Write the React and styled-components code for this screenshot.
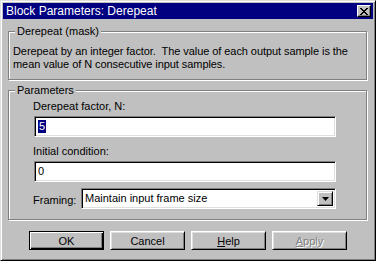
import React from "react";
import styled, { createGlobalStyle } from "styled-components";

const GlobalStyle = createGlobalStyle`
  html, body {
    margin: 0;
    padding: 0;
    background: #c0c0c0;
  }
  body {
    font-family: "Liberation Sans", Arial, sans-serif;
    font-size: 11px;
    color: #000;
  }
`;

const Window = styled.div`
  box-sizing: border-box;
  width: 376px;
  height: 261px;
  background: #c0c0c0;
  border: 1px solid;
  border-color: #dfdfdf #000 #000 #dfdfdf;
  box-shadow: inset 1px 1px 0 #fff, inset -1px -1px 0 #808080;
  padding: 2px;
  display: flex;
  flex-direction: column;
`;

const TitleBar = styled.div`
  height: 16px;
  background: #000080;
  color: #fff;
  display: flex;
  align-items: center;
  justify-content: space-between;
  padding: 0 2px 0 3px;
`;

const Title = styled.span`
  font-size: 12px;
  line-height: 16px;
  white-space: nowrap;
`;

const CloseButton = styled.div`
  box-sizing: border-box;
  width: 14px;
  height: 12px;
  background: #c0c0c0;
  border: 1px solid;
  border-color: #fff #000 #000 #fff;
  box-shadow: inset -1px -1px 0 #808080;
  display: flex;
  align-items: center;
  justify-content: center;
`;

const Body = styled.div`
  flex: 1;
  padding: 12px 6px 0 5px;
  display: flex;
  flex-direction: column;
`;

const GroupBox = styled.div`
  position: relative;
  border: 1px solid #808080;
  box-shadow: 1px 1px 0 #fff, inset 1px 1px 0 #fff;
  margin-top: ${(p) => p.$gap || 0}px;
  padding: ${(p) => p.$pad};
`;

const Legend = styled.span`
  position: absolute;
  top: -7px;
  left: 6px;
  padding: 0 2px;
  background: #c0c0c0;
  line-height: 13px;
`;

const Description = styled.p`
  margin: 0;
  line-height: 13px;
  letter-spacing: -0.07px;
`;

const FieldLabel = styled.div`
  line-height: 13px;
  margin-top: ${(p) => p.$gap || 0}px;
  margin-left: -1px;
`;

const EditBox = styled.div`
  box-sizing: border-box;
  height: 21px;
  margin-top: 3px;
  background: #fff;
  border: 1px solid;
  border-color: #808080 #fff #fff #808080;
  box-shadow: inset 1px 1px 0 #000, inset -1px -1px 0 #dfdfdf;
  padding: 3px 3px 0 3px;
  line-height: 13px;
  display: flex;
  align-items: flex-start;
  flex: ${(p) => (p.$grow ? 1 : "none")};
`;

const Selected = styled.span`
  background: #000080;
  color: #fff;
  padding: 0 1px;
  outline: 1px dotted #fff;
`;

const FramingRow = styled.div`
  display: flex;
  align-items: center;
  margin-top: 6px;
`;

const FramingLabel = styled.span`
  width: 48px;
  margin-left: -1px;
  padding-top: 4px;
  line-height: 13px;
`;

const Select = styled(EditBox)`
  margin-top: 0;
  padding: 2px 2px 2px 3px;
  align-items: stretch;
  justify-content: space-between;
`;

const SelectText = styled.span`
  padding-top: 1px;
`;

const DropButton = styled.div`
  box-sizing: border-box;
  width: 16px;
  background: #c0c0c0;
  border: 1px solid;
  border-color: #dfdfdf #000 #000 #dfdfdf;
  box-shadow: inset 1px 1px 0 #fff, inset -1px -1px 0 #808080;
  display: flex;
  align-items: center;
  justify-content: center;
`;

const ButtonRow = styled.div`
  display: flex;
  justify-content: center;
  gap: 6px;
  margin-top: 11px;
  padding-left: 1px;
`;

const Button = styled.div`
  box-sizing: border-box;
  width: 75px;
  height: 19px;
  display: flex;
  align-items: center;
  justify-content: center;
  background: #c0c0c0;
  border: 1px solid;
  border-color: ${(p) => (p.$default ? "#000" : "#fff #000 #000 #fff")};
  box-shadow: ${(p) =>
    p.$default
      ? "inset 1px 1px 0 #fff, inset -1px -1px 0 #000, inset -2px -2px 0 #808080"
      : "inset 1px 1px 0 #dfdfdf, inset -1px -1px 0 #808080"};
  color: ${(p) => (p.$disabled ? "#808080" : "#000")};
  text-shadow: ${(p) => (p.$disabled ? "1px 1px 0 #fff" : "none")};
  line-height: 13px;
  padding-top: 1px;
`;

const Accel = styled.span`
  text-decoration: underline;
`;

function CloseGlyph() {
  return (
    <svg width="8" height="7" viewBox="0 0 8 7">
      <path d="M0 0h2v1h1v1h2V1h1V0h2v1H7v1H6v1H5v1h1v1h1v1h1v1H6V6H5V5H3v1H2v1H0V6h1V5h1V4h1V3H2V2H1V1H0z" fill="#000" />
    </svg>
  );
}

function ArrowGlyph() {
  return (
    <svg width="7" height="4" viewBox="0 0 7 4">
      <path d="M0 0h7L3.5 4z" fill="#000" />
    </svg>
  );
}

export default function App() {
  return (
    <>
      <GlobalStyle />
      <Window>
        <TitleBar>
          <Title>Block Parameters: Derepeat</Title>
          <CloseButton>
            <CloseGlyph />
          </CloseButton>
        </TitleBar>
        <Body>
          <GroupBox $pad="13px 4px 8px 4px">
            <Legend>Derepeat (mask)</Legend>
            <Description>
              Derepeat by an integer factor.&nbsp; The value of each output sample is the
              <br />
              mean value of N consecutive input samples.
            </Description>
          </GroupBox>
          <GroupBox $gap={10} $pad="9px 30px 10px 25px">
            <Legend>Parameters</Legend>
            <FieldLabel>Derepeat factor, N:</FieldLabel>
            <EditBox>
              <Selected>5</Selected>
            </EditBox>
            <FieldLabel $gap={8}>Initial condition:</FieldLabel>
            <EditBox>0</EditBox>
            <FramingRow>
              <FramingLabel>Framing:</FramingLabel>
              <Select $grow>
                <SelectText>Maintain input frame size</SelectText>
                <DropButton>
                  <ArrowGlyph />
                </DropButton>
              </Select>
            </FramingRow>
          </GroupBox>
          <ButtonRow>
            <Button $default>OK</Button>
            <Button>Cancel</Button>
            <Button>
              <span>
                <Accel>H</Accel>elp
              </span>
            </Button>
            <Button $disabled>
              <span>
                <Accel>A</Accel>pply
              </span>
            </Button>
          </ButtonRow>
        </Body>
      </Window>
    </>
  );
}
